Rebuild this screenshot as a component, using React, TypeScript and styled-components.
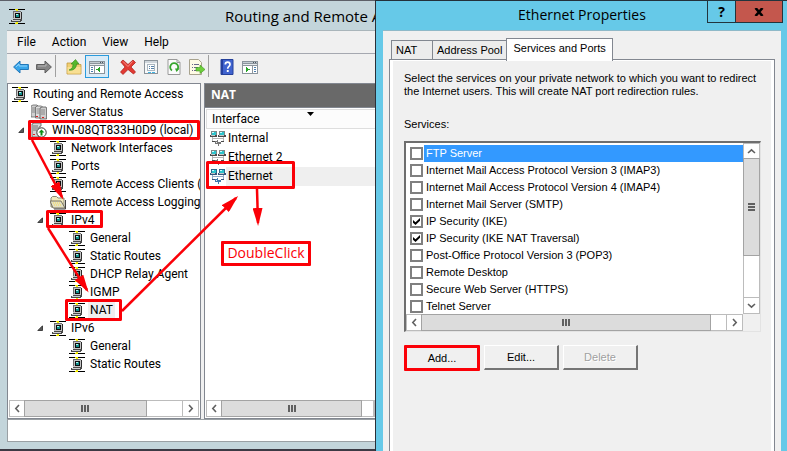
import React, { useState } from "react";
import styled, { createGlobalStyle, css } from "styled-components";

const SEGOE = `"Open Sans", "Noto Sans", sans-serif`;
const UI = `Roboto, "Open Sans", sans-serif`;
const SANS = `"Liberation Sans", Arial, sans-serif`;
const RED = "#fb0007";

const GlobalStyle = createGlobalStyle`
  *, *::before, *::after { box-sizing: border-box; }
  body { margin: 0; background: #f0f0f0; color: #000; overflow: hidden; }
  button, input { font: inherit; color: inherit; margin: 0; padding: 0; }
  ul { list-style: none; margin: 0; padding: 0; }
`;

/* ---------- windows ---------- */

const Desktop = styled.div`
  display: grid;
  grid-template-columns: minmax(0, 375fr) minmax(0, 412fr);
  min-height: 100vh;
`;

const ConsoleWindow = styled.section`
  position: relative;
  display: flex;
  flex-direction: column;
  min-width: 0;
  overflow: hidden;
  background: #c3d5db;
  border-top: 1px solid #5d6068;
  border-bottom: 2px solid #3c3a44;
  font: 12px/18px ${UI};
  white-space: nowrap;
`;

const ConsoleTitle = styled.header`
  display: flex;
  align-items: center;
  height: 29px;
  padding-left: 9px;
  gap: 200px;
`;

const TitleText = styled.h1<{ $small?: boolean }>`
  margin: 0;
  font: 400 ${(p) => (p.$small ? 14 : 15)}px/28px ${SEGOE};
`;

const ConsoleBody = styled.div`
  display: flex;
  flex: 1;
  flex-direction: column;
  margin: 0 0 7px 7px;
  background: #f0f0f0;
  border-top: 1px solid #a9b5ba;
  min-height: 0;
`;

const MenuBar = styled.nav`
  display: flex;
  gap: 16px;
  height: 23px;
  padding-left: 10px;
  border-bottom: 1px solid #a5a8b0;
`;

const MenuItem = styled.button`
  border: 0;
  background: none;
  line-height: 22px;
`;

const ToolBar = styled.div`
  display: flex;
  height: 29px;
  padding: 1px 0 5px 2px;
`;

const ToolButton = styled.button<{ $active?: boolean }>`
  display: grid;
  place-items: center;
  width: 23px;
  height: 23px;
  flex: none;
  border: 1px solid transparent;
  background: none;
  ${(p) => p.$active && css`
    width: 24px;
    margin-right: 7px;
    background: #d9ebf7;
    border-color: #2b9bdc;
  `}
`;

const ToolSeparator = styled.span`
  width: 1px;
  height: 22px;
  flex: none;
  margin-right: 6px;
  background: #a0a0a0;
`;

const Panes = styled.div`
  display: grid;
  grid-template-columns: 194px minmax(0, 1fr);
  gap: 3px;
  flex: 1;
`;

const Pane = styled.div`
  display: flex;
  flex-direction: column;
  min-width: 0;
  overflow: hidden;
  background: #fff;
  border: 1px solid #828790;
`;

const ListPane = styled(Pane)`
  border-right: 0;
`;

const StatusBar = styled.footer`
  height: 23px;
  background: #fff;
  border: 1px solid #9aa0a4;
  border-right: 0;
`;

/* ---------- tree ---------- */

const Tree = styled.ul`
  flex: 1;
  padding: 1px 0 0 4px;
`;

const TreeRow = styled.li<{ $level: number }>`
  display: flex;
  align-items: center;
  height: 18px;
  padding-left: ${(p) => (p.$level === 0 ? 0 : p.$level * 19 - 13)}px;
`;

const Twisty = styled.span<{ $open?: boolean }>`
  display: grid;
  place-items: center start;
  width: 13px;
  flex: none;
  visibility: ${(p) => (p.$open ? "visible" : "hidden")};
`;

const TreeLabel = styled.span<{ $selected?: boolean }>`
  margin-left: 3px;
  padding: 0 2px;
  background: ${(p) => (p.$selected ? "#efefef" : "none")};
`;

/* ---------- interface list ---------- */

const ListCaption = styled.h2`
  margin: 0;
  padding-left: 6px;
  height: 23px;
  background: #696969;
  color: #fff;
  font: 700 12px/22px ${SEGOE};
`;

const ListFrame = styled.div`
  display: flex;
  flex: 1;
  flex-direction: column;
  padding: 1px 0 1px 1px;
  border-top: 1px solid #828790;
`;

const InterfaceTable = styled.table`
  width: 100%;
  border-collapse: separate;
  border-spacing: 0;

  th {
    position: relative;
    height: 20px;
    padding: 0 0 0 5px;
    text-align: left;
    font-weight: 400;
    line-height: 18px;
    background: #fcfcfc;
    border: 1px solid #dedede;
    border-right: 0;
  }
  td {
    height: 19px;
    padding: 0 0 0 4px;
  }
`;

const SortMark = styled.svg`
  position: absolute;
  left: 100px;
  top: 2px;
`;

const InterfaceCell = styled.div<{ $selected?: boolean }>`
  display: flex;
  align-items: center;
  height: 19px;

  span {
    flex: 1;
    padding-left: 2px;
    line-height: 19px;
    background: ${(p) => (p.$selected ? "#efefef" : "none")};
  }
`;

const Fill = styled.div`
  flex: 1;
`;

/* ---------- scroll bars ---------- */

const Bar = styled.div<{ $vertical?: boolean; $inset?: boolean }>`
  display: flex;
  flex: none;
  flex-direction: ${(p) => (p.$vertical ? "column" : "row")};
  ${(p) => (p.$vertical ? "width: 17px;" : "height: 17px;")}
  margin: ${(p) => (p.$inset ? "0 1px 1px" : "0")};
  background: #fff;
  border: 1px solid #bcbcbc;
`;

const BarArrow = styled.button`
  display: grid;
  place-items: center;
  width: 15px;
  height: 15px;
  flex: none;
  border: 0;
  background: #fff;
`;

const BarThumb = styled.div<{ $grow: number }>`
  display: grid;
  place-items: center;
  flex: ${(p) => p.$grow} 1 0;
  margin: -1px;
  border: 1px solid #a3a3a3;
  background: #dcdcdc;
`;

const BarRest = styled.div<{ $grow: number; $vertical?: boolean }>`
  flex: ${(p) => p.$grow} 1 0;
  ${(p) => (p.$vertical ? "border-bottom" : "border-right")}: 1px solid #bcbcbc;
`;

const ANGLES = { left: 180, right: 0, up: 270, down: 90 };

const Chevron = ({ to }: { to: keyof typeof ANGLES }) => (
  <svg width="9" height="9" viewBox="0 0 9 9">
    <path
      d="M3 1 L6.2 4.5 L3 8"
      fill="none"
      stroke="#606060"
      strokeWidth="1.6"
      transform={`rotate(${ANGLES[to]} 4.5 4.5)`}
    />
  </svg>
);

type ScrollProps = { vertical?: boolean; inset?: boolean; thumb: number; rest: number; end?: boolean };

const ScrollBar = ({ vertical, inset, thumb, rest, end = true }: ScrollProps) => (
  <Bar $vertical={vertical} $inset={inset}>
    <BarArrow aria-label={vertical ? "Scroll up" : "Scroll left"}>
      <Chevron to={vertical ? "up" : "left"} />
    </BarArrow>
    <BarThumb $grow={thumb}>
      <svg width="8" height="8" viewBox="0 0 8 8" shapeRendering="crispEdges">
        <path d={vertical ? "M0 0h7v2H0zM0 3h7v2H0zM0 6h7v2H0z" : "M0 0h2v7H0zM3 0h2v7H3zM6 0h2v7H6z"} fill="#606060" />
      </svg>
    </BarThumb>
    <BarRest $grow={rest} $vertical={vertical} />
    {end && (
      <BarArrow aria-label={vertical ? "Scroll down" : "Scroll right"}>
        <Chevron to={vertical ? "down" : "right"} />
      </BarArrow>
    )}
  </Bar>
);

/* ---------- icons ---------- */

const Pix = styled.svg.attrs({ width: 16, height: 16, viewBox: "0 0 16 16" })`
  display: block;
  flex: none;
`;

const NodeIcon = () => (
  <Pix shapeRendering="crispEdges">
    <path d="M0 1h16v1H0zM0 15h16v1H0z" fill="#000" />
    <path d="M6 1h3v1H6zM7 2h2v1H7zM6 15h3v1H6zM7 14h2v1H7z" fill="#f7f000" />
    <path d="M4 3h8v1h1v8H4z" fill="#2b2b2b" />
    <path d="M4 3h8v8H4z" fill="#c4c4c4" />
    <path d="M4 3h8v1H4zM4 3h1v7H4z" fill="#6e6e6e" />
    <path d="M6 5h5v5H6z" fill="#0c0c0c" />
    <path d="M7 6h3v3H7z" fill="#128f8a" />
    <path d="M7 6h2v1H7z" fill="#b5f5f2" />
    <path d="M2 12h2v-1h9v2h-1v1H2z" fill="#4a4a4a" />
    <path d="M3 12h8v1H3z" fill="#cfcfcf" />
  </Pix>
);

const ServersIcon = () => (
  <Pix>
    <path d="M0 2l2-1h4l1 1v11H0z" fill="#d0d0d0" stroke="#555" strokeWidth=".7" />
    <path d="M4.500 3l2-1h4l1 1v11h-7z" fill="#dedede" stroke="#555" strokeWidth=".7" />
    <path d="M9 4l2-1h4l.6 1v11H9z" fill="#cfcfcf" stroke="#444" strokeWidth=".7" />
    <path d="M1 4h3M1 6h3M5.500 5h3M5.500 7h3M10 6h4M10 8h4M10 10h4M1 8h3M5.500 9h3" stroke="#777" strokeWidth=".8" />
    <path d="M5 12h2v1H5zM11 13h2v1h-2z" fill="#e02020" />
  </Pix>
);

const LocalServerIcon = () => (
  <Pix>
    <path d="M1 2l2-1h7v3L8 5v10H1z" fill="#d6d6d6" stroke="#555" strokeWidth=".8" />
    <path d="M2 4h5M2 6h5M2 8h4" stroke="#666" strokeWidth=".9" />
    <path d="M2 12h2v1H2z" fill="#d22" />
    <circle cx="10.500" cy="10.500" r="4.700" fill="#fff" stroke="#333" />
    <path d="M10.500 7.500l3 3h-2v3h-2v-3h-2z" fill="#0b8a14" />
  </Pix>
);

const FolderIcon = () => (
  <Pix>
    <path d="M1 13V4l1.500-1.500h4L8 4h6v9z" fill="#f1e9bb" stroke="#8b8873" />
    <path d="M0 7h11l4 7H3z" fill="#e4e0c4" stroke="#6b6858" strokeWidth=".9" />
    <path d="M3 9h8M4 11h8" stroke="#f8e04a" strokeDasharray="1 1" />
    <path d="M15.500 6v9H4" fill="none" stroke="#444" />
  </Pix>
);

const LinkIcon = ({ blue }: { blue?: boolean }) => {
  const dark = blue ? "#34557c" : "#4a4a4a";
  return (
    <Pix shapeRendering="crispEdges">
      <path d="M1 0h6v4H1zM9 0h6v4H9z" fill={blue ? "#2c6a8e" : "#7c8888"} />
      <path d="M2 1h4v3H2zM10 1h4v3h-4z" fill="#2cc4cd" />
      <path d="M2 1h2v1H2zM10 1h2v1h-2z" fill="#c9ffff" />
      <path d="M0 4h7v2H0zM8 4h8v2H8z" fill={dark} />
      <path d="M1 4h4v1H1zM9 4h5v1H9z" fill="#c4c4c4" />
      <path d="M2 6h1v4H2zM13 6h1v4h-1zM2 7h12v1H2z" fill={blue ? "#8fa9c4" : "#b5b5b5"} />
      <path d="M2 10h3v1H2zM11 10h3v1h-3z" fill={dark} />
      <path d="M5 10h2V9h1v2h3v2H9v2H8v-2H5z" fill={blue ? "#3f78ad" : "#777"} />
      <path d="M6 11h1v1H6z" fill="#eee" />
    </Pix>
  );
};

const ArrowIcon = ({ forward }: { forward?: boolean }) => (
  <Pix>
    <path
      d="M.6 8L7 2v3.500h8.400v5H7V14z"
      transform={forward ? "rotate(180 8 8)" : undefined}
      fill={forward ? "#858585" : "#38a6ea"}
      stroke={forward ? "#5c5c5c" : "#2277b8"}
    />
    <path
      d={forward ? "M2 7h8V5" : "M3 8l3-3v2h8"}
      fill="none"
      stroke={forward ? "#b4b4b4" : "#8fd3fb"}
    />
  </Pix>
);

const UpFolderIcon = () => (
  <Pix>
    <path d="M1 4h5l1 1.500h8V15H1z" fill="#f0cf73" stroke="#c39a3c" strokeWidth=".8" />
    <path d="M1.500 8h13v6.500h-13z" fill="#f8df93" />
    <path d="M3 11c3-1 4-3 4-6H5l4.500-4.500L13 5h-2.500c0 4-3 7-7.500 6z" fill="#55b82c" stroke="#2f8a18" strokeWidth=".6" />
  </Pix>
);

const PaneIcon = ({ right }: { right?: boolean }) => (
  <Pix shapeRendering="crispEdges">
    <path d="M0 2h16v13H0z" fill="#8b949c" />
    <path d="M1 3h14v1H1z" fill="#c4ccd2" />
    <path d="M11 3h1v1h-1zM13 3h1v1h-1z" fill="#4a5560" />
    <path d="M1 5h14v1H1z" fill="#e6eaed" />
    <path d={right ? "M1 7h9v7H1zM11 7h4v7h-4z" : "M1 7h4v7H1zM6 7h9v7H6z"} fill="#fff" />
    <path d={right ? "M12 8h2v1h-2zM12 10h2v1h-2zM12 12h2v1h-2z" : "M2 8h2v1H2zM2 10h2v1H2zM2 12h2v1H2z"} fill="#4c7fae" />
    <path d={right ? "M4 8l4 2.500L4 13z" : "M11 8l-4 2.500 4 2.500z"} fill="#28a428" />
  </Pix>
);

const DeleteIcon = () => (
  <Pix>
    <path d="M3 1l5 4.500L13 1l2.500 2.500L11 8l4.500 5-2 2L8 10.500 3 15.500.5 13 5 8 .8 3z" fill="#e23a33" stroke="#a91916" strokeWidth=".7" />
    <path d="M3 2.500l5 5 4.500-5" fill="none" stroke="#f78b84" />
  </Pix>
);

const PropertiesIcon = () => (
  <Pix shapeRendering="crispEdges">
    <path d="M1 1h14v14H1z" fill="#8c949b" />
    <path d="M2 2h12v12H2z" fill="#f7f9fa" />
    <path d="M2 2h12v2H2z" fill="#cfd6dc" />
    <path d="M4 5h8v7H4z" fill="#aab6c0" />
    <path d="M5 6h6v5H5z" fill="#fff" />
    <path d="M6 7h1v1H6zM8 7h3v1H8zM6 9h1v1H6zM8 9h3v1H8z" fill="#5681a8" />
    <path d="M5 13h3v1H5zM9 13h3v1H9z" fill="#3fb4e4" />
  </Pix>
);

const RefreshIcon = () => (
  <Pix>
    <path d="M2 .5h9l3 3v12H2z" fill="#fbfbfb" stroke="#9a9a9a" />
    <path d="M11 .5v3h3" fill="none" stroke="#9a9a9a" />
    <path d="M6 11.500a4 4 0 1 1 5-.5" fill="none" stroke="#37a52f" strokeWidth="1.800" />
    <path d="M9 9.500h4.500L10.500 13z" fill="#37a52f" />
  </Pix>
);

const ExportIcon = () => (
  <Pix>
    <path d="M.5.500h9l3 3v12H.5z" fill="#fffbe6" stroke="#a8a38e" />
    <path d="M3 5.500h1M3 8.500h1M3 11.500h1M5 5.500h5M5 8.500h4M5 11.500h4" stroke="#6a6a8a" />
    <path d="M7 8.500h4V6l5 4.500-5 4V12H7z" fill="#6fcf3c" stroke="#3d9a1e" strokeWidth=".6" />
  </Pix>
);

const HelpIcon = () => (
  <Pix>
    <path d="M2 .5h12v15H2z" fill="#3f63cf" stroke="#24409a" />
    <path d="M2 1h2v14H2z" fill="#253f9e" />
    <path d="M6.300 5.500c0-3.200 4.700-3.200 4.700 0 0 2-2.300 2-2.300 4.200" fill="none" stroke="#fff" strokeWidth="1.700" />
    <path d="M7.800 11h1.900v2H7.800z" fill="#fff" />
  </Pix>
);

/* ---------- annotations ---------- */

const Marks = styled.svg`
  position: absolute;
  left: 0;
  top: -1px;
  width: 100%;
  height: 100%;
  pointer-events: none;
`;

const Note = styled.strong`
  position: absolute;
  left: 221px;
  top: 240px;
  width: 90px;
  height: 25px;
  border: 3px solid ${RED};
  border-radius: 1px;
  color: ${RED};
  text-align: center;
  font: 400 14px/18px ${SEGOE};
`;

const ARROWS = [
  "M32 140L62 197",
  "M48 228L87 290",
  "M122 311L236 198",
  "M257 189L258 223",
];

const Annotations = () => (
  <>
    <Marks fill="none" stroke={RED} strokeWidth="3" strokeLinejoin="round">
      <defs>
        <marker id="tip" markerUnits="userSpaceOnUse" markerWidth="18" markerHeight="10" refX="15" refY="5" orient="auto">
          <path d="M0 0L18 5L0 10z" fill={RED} stroke="none" />
        </marker>
      </defs>
      <rect x="29.500" y="121.500" width="169" height="17" />
      <rect x="47.500" y="211.500" width="54" height="15" />
      <rect x="66.500" y="300.500" width="54" height="19" />
      <rect x="207.500" y="162.500" width="86" height="25" />
      {ARROWS.map((d) => (
        <path key={d} d={d} strokeWidth="2.500" markerEnd="url(#tip)" />
      ))}
    </Marks>
    <Note>DoubleClick</Note>
  </>
);

/* ---------- dialog ---------- */

const Dialog = styled.section`
  display: flex;
  flex-direction: column;
  min-width: 0;
  padding: 0 6px 0 7px;
  background: #66c9e8;
  border-top: 1px solid #23303a;
  border-left: 1px solid #2b3038;
  font: 11px/13px ${SANS};
`;

const DialogTitle = styled.header`
  position: relative;
  height: 29px;
  text-align: center;
`;

const WindowButtons = styled.div`
  position: absolute;
  top: -1px;
  right: -2px;
  display: flex;
`;

const WindowButton = styled.button<{ $close?: boolean }>`
  display: grid;
  place-items: center;
  width: ${(p) => (p.$close ? 48 : 29)}px;
  height: 23px;
  margin-left: ${(p) => (p.$close ? -1 : 0)}px;
  border: 1px solid #22343d;
  background: ${(p) => (p.$close ? "#c4574d" : "#66c9e8")};
  font: 700 14px/20px ${SEGOE};
`;

const DialogBody = styled.div`
  display: flex;
  flex: 1;
  flex-direction: column;
  padding: 7px 6px 0;
  background: #f0f0f0;
  border-top: 1px solid #8fb9c8;
`;

const Tabs = styled.div`
  display: flex;
  align-items: flex-end;
  padding-left: 2px;
  height: 21px;
`;

const Tab = styled.button<{ $current?: boolean }>`
  position: relative;
  height: 19px;
  padding: 0 4px;
  text-align: left;
  border: 1px solid #828790;
  border-bottom: 0;
  margin-right: -1px;
  background: #ececec;
  min-width: 42px;
  ${(p) => p.$current && css`
    height: 23px;
    padding: 0 6px 3px;
    margin-bottom: -2px;
    background: #fff;
  `}
`;

const TabPanel = styled.div`
  flex: 1;
  padding: 12px 13px 0 11px;
  border: 1px solid #828790;
  border-bottom: 0;
  box-shadow: inset 0 1px #fff, inset 3px 0 #fff, inset -3px 0 #fff;
`;

const Hint = styled.p`
  margin: 0 0 20px 3px;
  white-space: nowrap;
`;

const ListLabel = styled.div`
  margin: 0 0 10px 3px;
`;

const ServiceBox = styled.div`
  display: grid;
  grid-template-columns: minmax(0, 1fr) 17px;
  margin-left: 3px;
  border: 1px solid #e3e3e3;
  border-top: 2px solid #6e6e6e;
  border-left: 2px solid #6e6e6e;
`;

const ServiceList = styled.ul`
  height: 171px;
  padding: 2px 0 0 4px;
  overflow: hidden;
  background: #fff;
  white-space: nowrap;
`;

const ServiceRow = styled.label<{ $selected?: boolean }>`
  display: flex;
  align-items: center;
  height: 17px;
  gap: 1px;

  span {
    flex: 1;
    padding-left: 2px;
    line-height: 17px;
    color: ${(p) => (p.$selected ? "#fff" : "#000")};
    background: ${(p) => (p.$selected ? "#3399ff" : "none")};
  }
`;

const CheckBox = styled.input.attrs({ type: "checkbox" })`
  appearance: none;
  display: block;
  width: 13px;
  height: 13px;
  flex: none;
  border: 2px solid #808080;
  background: #fff;

  &:checked::before {
    content: "";
    display: block;
    width: 7px;
    height: 7px;
    margin: 1px;
    background: #000;
    clip-path: polygon(0 30%, 36% 62%, 100% 0, 100% 38%, 36% 100%, 0 68%);
  }
`;

const Actions = styled.div`
  display: flex;
  gap: 4px;
  padding: 13px 0 0 3px;
`;

const Action = styled.button<{ $marked?: boolean }>`
  width: 75px;
  height: 25px;
  background: #f0f0f0;
  border: 1px solid #fff;
  border-right: 2px solid #757575;
  border-bottom: 2px solid #757575;
  ${(p) => p.$marked && css`
    width: 76px;
    height: 26px;
    border: 3px solid ${RED};
    border-radius: 1px;
  `}
  &:disabled {
    color: #a0a0a0;
    text-shadow: 1px 1px #fff;
  }
`;

/* ---------- data ---------- */

type TreeNode = { level: number; label: string; icon?: React.FC; open?: boolean; selected?: boolean };

const NODES: TreeNode[] = [
  { level: 0, label: "Routing and Remote Access" },
  { level: 1, label: "Server Status", icon: ServersIcon },
  { level: 1, label: "WIN-08QT833H0D9 (local)", icon: LocalServerIcon, open: true },
  { level: 2, label: "Network Interfaces" },
  { level: 2, label: "Ports" },
  { level: 2, label: "Remote Access Clients (0)" },
  { level: 2, label: "Remote Access Logging", icon: FolderIcon },
  { level: 2, label: "IPv4", open: true },
  { level: 3, label: "General" },
  { level: 3, label: "Static Routes" },
  { level: 3, label: "DHCP Relay Agent" },
  { level: 3, label: "IGMP" },
  { level: 3, label: "NAT", selected: true },
  { level: 2, label: "IPv6", open: true },
  { level: 3, label: "General" },
  { level: 3, label: "Static Routes" },
];

const INTERFACES = ["Internal", "Ethernet 2", "Ethernet"];

const SERVICES = [
  "FTP Server",
  "Internet Mail Access Protocol Version 3 (IMAP3)",
  "Internet Mail Access Protocol Version 4 (IMAP4)",
  "Internet Mail Server (SMTP)",
  "IP Security (IKE)",
  "IP Security (IKE NAT Traversal)",
  "Post-Office Protocol Version 3 (POP3)",
  "Remote Desktop",
  "Secure Web Server (HTTPS)",
  "Telnet Server",
];

const RemoteAccessConsole = () => (
  <ConsoleWindow>
    <ConsoleTitle>
      <NodeIcon />
      <TitleText>Routing and Remote Access</TitleText>
    </ConsoleTitle>
    <ConsoleBody>
      <MenuBar>
        {["File", "Action", "View", "Help"].map((m) => (
          <MenuItem key={m}>{m}</MenuItem>
        ))}
      </MenuBar>
      <ToolBar>
        <ToolButton aria-label="Back"><ArrowIcon /></ToolButton>
        <ToolButton aria-label="Forward"><ArrowIcon forward /></ToolButton>
        <ToolSeparator />
        <ToolButton aria-label="Up"><UpFolderIcon /></ToolButton>
        <ToolButton aria-label="Console tree" $active><PaneIcon /></ToolButton>
        <ToolButton aria-label="Delete"><DeleteIcon /></ToolButton>
        <ToolButton aria-label="Properties"><PropertiesIcon /></ToolButton>
        <ToolButton aria-label="Refresh"><RefreshIcon /></ToolButton>
        <ToolButton aria-label="Export list"><ExportIcon /></ToolButton>
        <ToolSeparator />
        <ToolButton aria-label="Help"><HelpIcon /></ToolButton>
        <ToolButton aria-label="Action pane"><PaneIcon right /></ToolButton>
      </ToolBar>
      <Panes>
        <Pane>
          <Tree>
            {NODES.map(({ level, label, icon: Icon = NodeIcon, open, selected }, i) => (
              <TreeRow key={i} $level={level}>
                {level > 0 && (
                  <Twisty $open={open}>
                    <svg width="6" height="6" viewBox="0 0 6 6">
                      <path d="M5.500.800V5.500H.8z" fill="#595959" stroke="#262626" strokeWidth=".8" />
                    </svg>
                  </Twisty>
                )}
                <Icon />
                <TreeLabel $selected={selected}>{label}</TreeLabel>
              </TreeRow>
            ))}
          </Tree>
          <ScrollBar inset thumb={120} rest={36} />
        </Pane>
        <ListPane>
          <ListCaption>NAT</ListCaption>
          <ListFrame>
            <InterfaceTable>
              <thead>
                <tr>
                  <th scope="col">
                    Interface
                    <SortMark width="7" height="4" viewBox="0 0 7 4">
                      <path d="M0 0h7L3.500 4z" />
                    </SortMark>
                  </th>
                </tr>
              </thead>
              <tbody>
                {INTERFACES.map((name) => (
                  <tr key={name}>
                    <td>
                      <InterfaceCell $selected={name === "Ethernet"}>
                        <LinkIcon blue={name === "Ethernet"} />
                        <span>{name}</span>
                      </InterfaceCell>
                    </td>
                  </tr>
                ))}
              </tbody>
            </InterfaceTable>
            <Fill />
            <ScrollBar thumb={140} rest={12} end={false} />
          </ListFrame>
        </ListPane>
      </Panes>
      <StatusBar />
    </ConsoleBody>
    <Annotations />
  </ConsoleWindow>
);

const PropertiesDialog = () => {
  const [checked, setChecked] = useState([4, 5]);
  const toggle = (i: number) =>
    setChecked((c) => (c.includes(i) ? c.filter((x) => x !== i) : [...c, i]));

  return (
    <Dialog role="dialog" aria-label="Ethernet Properties">
      <DialogTitle>
        <TitleText $small>Ethernet Properties</TitleText>
        <WindowButtons>
          <WindowButton>?</WindowButton>
          <WindowButton $close aria-label="Close">
            <svg width="10" height="8" viewBox="0 0 10 8">
              <path d="M1.500 0L8.500 8M8.500 0L1.500 8" stroke="#000" strokeWidth="2.600" />
            </svg>
          </WindowButton>
        </WindowButtons>
      </DialogTitle>
      <DialogBody>
        <Tabs role="tablist">
          <Tab role="tab">NAT</Tab>
          <Tab role="tab">Address Pool</Tab>
          <Tab role="tab" $current aria-selected>Services and Ports</Tab>
        </Tabs>
        <TabPanel role="tabpanel">
          <Hint>
            Select the services on your private network to which you want to redirect
            <br />
            the Internet users. This will create NAT port redirection rules.
          </Hint>
          <ListLabel id="services-label">Services:</ListLabel>
          <ServiceBox>
            <ServiceList aria-labelledby="services-label">
              {SERVICES.map((name, i) => (
                <li key={name}>
                  <ServiceRow $selected={i === 0}>
                    <CheckBox checked={checked.includes(i)} onChange={() => toggle(i)} />
                    <span>{name}</span>
                  </ServiceRow>
                </li>
              ))}
            </ServiceList>
            <ScrollBar vertical thumb={95} rest={42} />
            <ScrollBar thumb={286} rest={16} />
          </ServiceBox>
          <Actions>
            <Action $marked>Add...</Action>
            <Action>Edit...</Action>
            <Action disabled>Delete</Action>
          </Actions>
        </TabPanel>
      </DialogBody>
    </Dialog>
  );
};

export default function App() {
  return (
    <>
      <GlobalStyle />
      <Desktop>
        <RemoteAccessConsole />
        <PropertiesDialog />
      </Desktop>
    </>
  );
}
